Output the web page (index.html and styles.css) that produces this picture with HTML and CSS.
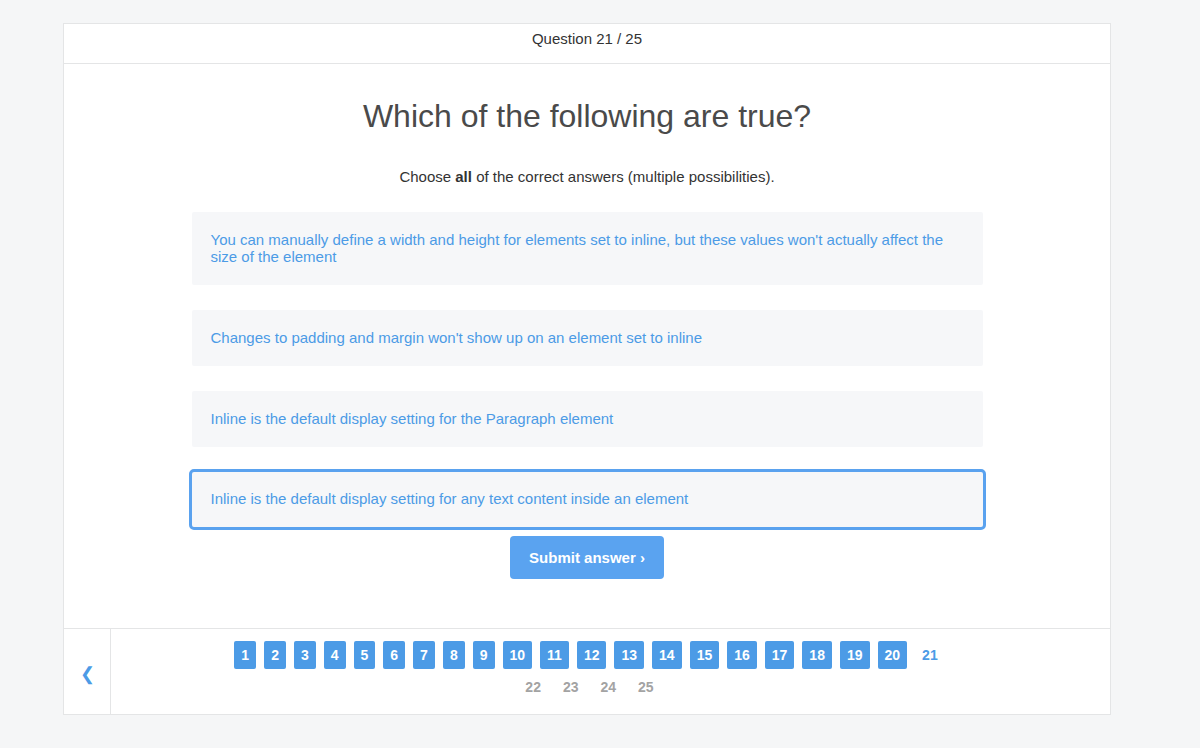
FILE: index.html
```html
<!DOCTYPE html>
<html lang="en">
<head>
    <meta charset="UTF-8">
    <meta name="viewport" content="width=device-width, initial-scale=1.0">
    <title>Quiz</title>
    <link rel="stylesheet" href="styles.css">
</head>
<body>

    <div class="quiz">
        <div class="quiz-header">Question 21 / 25</div>

        <div class="quiz-body">
            <h1>Which of the following are true?</h1>
            <p class="hint">Choose <b>all</b> of the correct answers (multiple possibilities).</p>

            <div class="options">
                <div class="option">You can manually define a width and height for elements set to inline, but these values won't actually affect the size of the element</div>
                <div class="option">Changes to padding and margin won't show up on an element set to inline</div>
                <div class="option">Inline is the default display setting for the Paragraph element</div>
                <div class="option selected">Inline is the default display setting for any text content inside an element</div>
            </div>

            <button class="submit">Submit answer &rsaquo;</button>
        </div>

        <div class="quiz-footer">
            <a href="#" class="prev">&#10094;</a>
            <div class="pages">
                <a href="#" class="page done">1</a>
                <a href="#" class="page done">2</a>
                <a href="#" class="page done">3</a>
                <a href="#" class="page done">4</a>
                <a href="#" class="page done">5</a>
                <a href="#" class="page done">6</a>
                <a href="#" class="page done">7</a>
                <a href="#" class="page done">8</a>
                <a href="#" class="page done">9</a>
                <a href="#" class="page done">10</a>
                <a href="#" class="page done">11</a>
                <a href="#" class="page done">12</a>
                <a href="#" class="page done">13</a>
                <a href="#" class="page done">14</a>
                <a href="#" class="page done">15</a>
                <a href="#" class="page done">16</a>
                <a href="#" class="page done">17</a>
                <a href="#" class="page done">18</a>
                <a href="#" class="page done">19</a>
                <a href="#" class="page done">20</a>
                <a href="#" class="page current">21</a>
                <a href="#" class="page">22</a>
                <a href="#" class="page">23</a>
                <a href="#" class="page">24</a>
                <a href="#" class="page">25</a>
            </div>
        </div>
    </div>

</body>
</html>
```

FILE: styles.css
```css
body {
    font-family: "Liberation Sans", Arial, sans-serif;
    margin: 0;
    padding: 23px 0 0 63px;
    background-color: #f5f6f7;
    color: #4a4a4a;
}

.quiz {
    width: 1046px;
    background-color: white;
    border: 1px solid #e4e5e6;
}

.quiz-header {
    height: 39px;
    line-height: 30px;
    text-align: center;
    font-size: 15px;
    color: #333;
    border-bottom: 1px solid #e4e5e6;
}

.quiz-body {
    display: flex;
    flex-direction: column;
    align-items: center;
    padding: 33px 0 49px;
}

.quiz-body h1 {
    margin: 0;
    font-size: 32px;
    font-weight: normal;
    line-height: 38px;
    color: #4a4a4a;
}

.hint {
    margin: 33px 0 24px;
    font-size: 15px;
    line-height: 17px;
    color: #333;
}

.options {
    display: flex;
    flex-direction: column;
    gap: 19px;
    width: 797px;
}

.option {
    padding: 19px 19px 20px 19px;
    font-size: 15px;
    line-height: 17px;
    color: #4c9be6;
    background-color: #f6f7f9;
    background-clip: padding-box;
    border: 3px solid transparent;
    border-radius: 5px;
    cursor: pointer;
}

.option.selected {
    border-color: #5aa2ef;
    padding-top: 18px;
}

.submit {
    margin-top: 6px;
    width: 154px;
    height: 43px;
    font-family: inherit;
    font-size: 15px;
    font-weight: bold;
    color: white;
    background-color: #5aa3f0;
    border: none;
    border-radius: 4px;
    cursor: pointer;
}

.quiz-footer {
    display: flex;
    border-top: 1px solid #e4e5e6;
}

.prev {
    width: 46px;
    display: flex;
    align-items: center;
    justify-content: center;
    padding-top: 4px;
    border-right: 1px solid #e4e5e6;
    color: #4c9be6;
    font-size: 18px;
    text-decoration: none;
}

.pages {
    flex: 1;
    display: flex;
    flex-wrap: wrap;
    justify-content: center;
    align-content: flex-start;
    gap: 4px 8px;
    padding: 12px 158px 13px 116px;
}

.page {
    height: 28px;
    line-height: 28px;
    padding: 0 7px;
    font-size: 14px;
    font-weight: bold;
    color: #a3a3a3;
    text-decoration: none;
    border-radius: 2px;
}

.page.done {
    color: white;
    background-color: #4c9be6;
}

.page.current {
    color: #4c9be6;
}
```
